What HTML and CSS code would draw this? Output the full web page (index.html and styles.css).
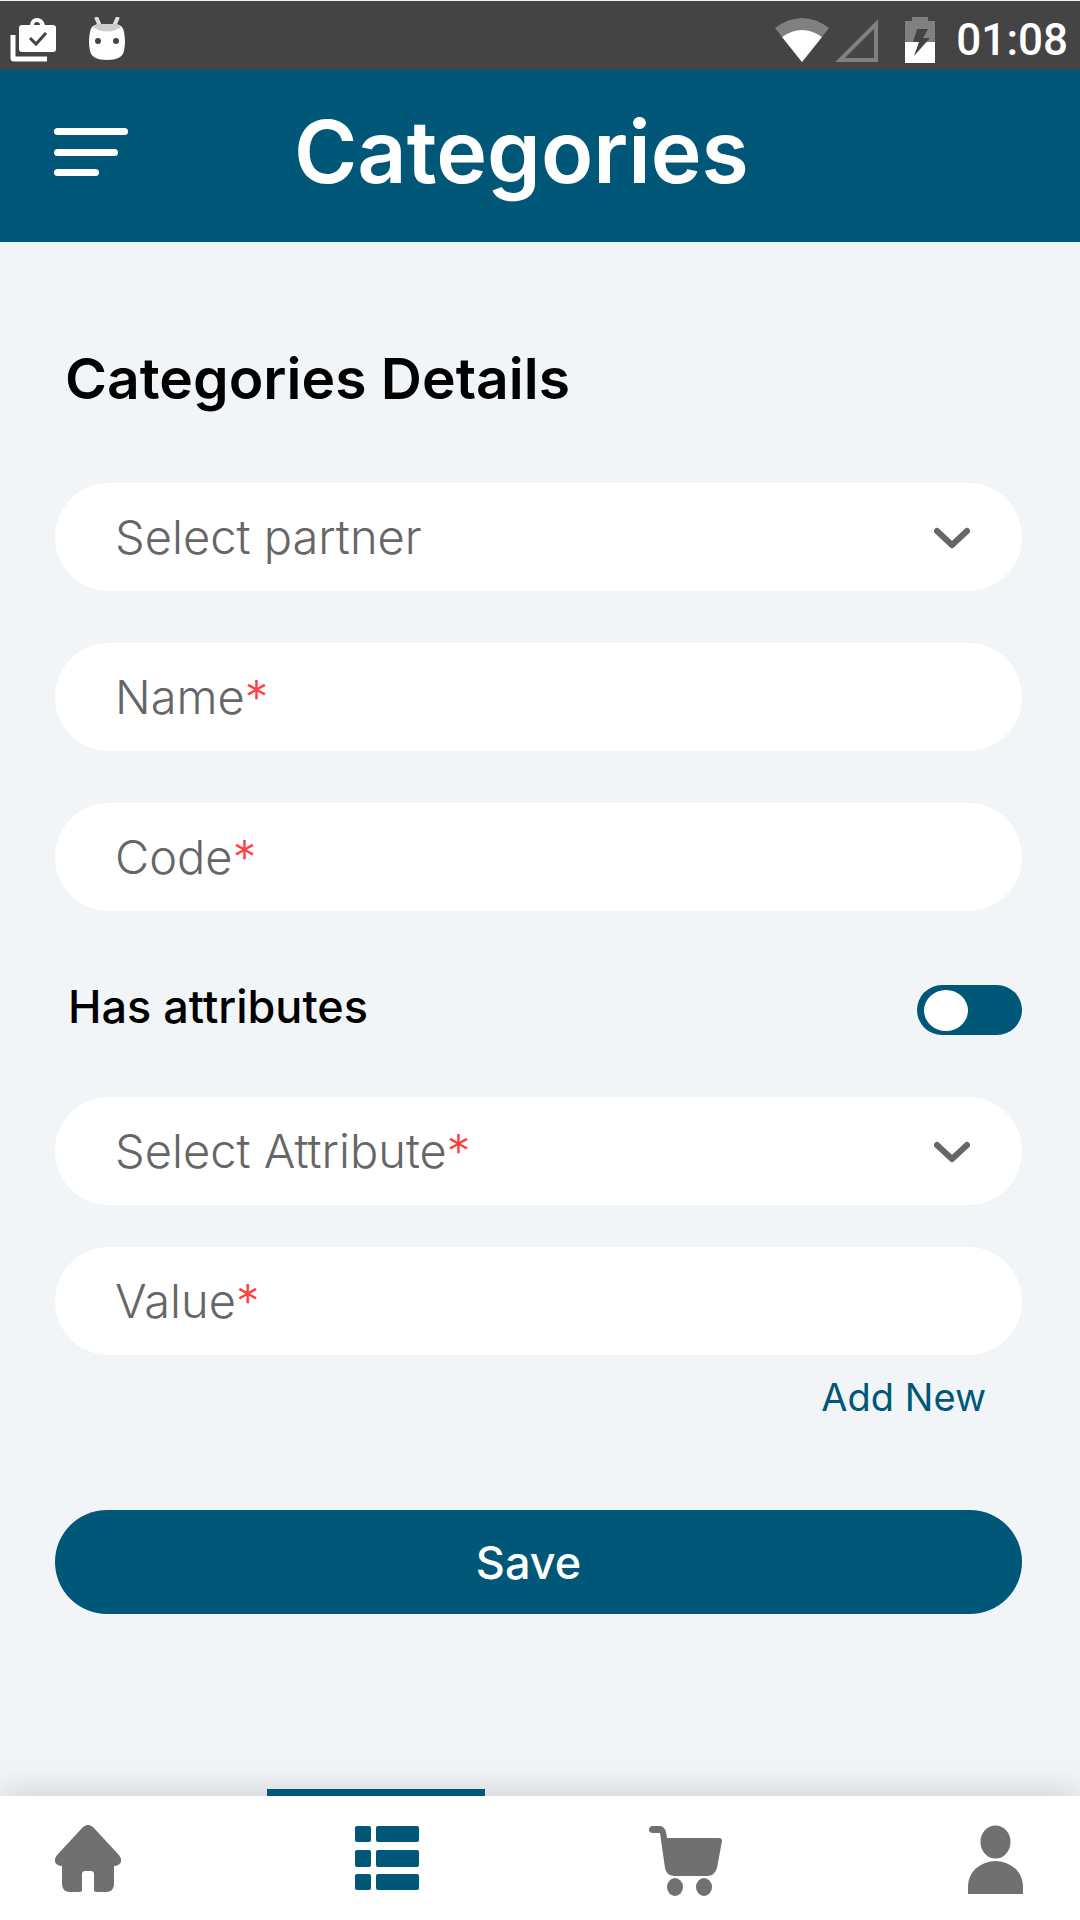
FILE: index.html
```html
<!DOCTYPE html>
<html lang="en">
<head>
  <meta charset="utf-8">
  <meta name="viewport" content="width=device-width, initial-scale=1">
  <title>Categories</title>
  <link rel="stylesheet" href="styles.css">
</head>
<body>
  <div class="status-bar">
    <svg class="status-icon" width="48" height="46" viewBox="0 0 48 46" aria-hidden="true">
      <path fill="none" stroke="#fff" stroke-width="5" stroke-linejoin="round" d="M3 18v23q0 1 1 1h33"/>
      <path fill="#fff" fill-rule="evenodd" d="M12 8h8q1-7 7-7t8 7h8q3 0 3 3v21q0 3-3 3H12q-3 0-3-3V11q0-3 3-3zM24 8h6q0-3-3-3t-3 3z"/>
      <path fill="none" stroke="#444" stroke-width="3" d="M20 21l6 6 10-11"/>
    </svg>
    <svg class="status-icon status-icon--droid" width="38" height="46" viewBox="0 0 38 46" aria-hidden="true">
      <path stroke="#ddd" stroke-width="4" d="M8 0l4 9M30 0l-4 9"/>
      <path fill="#fff" d="M10 7h18q7 1 8 8 2 10 0 19-2 9-17 9T2 34q-2-9 0-19 1-7 8-8z"/>
      <path fill="#ccc" d="M10 7h18q4 1 5 5-3-2-5 1-9 3-18 0-2-3-5-1 1-4 5-5z"/>
      <circle cx="10" cy="24" r="3" fill="#444"/><circle cx="28" cy="24" r="3" fill="#444"/>
    </svg>
    <svg class="status-icon status-icon--wifi" width="54" height="46" viewBox="0 0 54 46" aria-hidden="true">
      <path fill="#808080" d="M0 11Q27-9 54 11L27 45z"/>
      <path fill="#fff" d="M7 20q20-14 40 0L27 45z"/>
    </svg>
    <svg class="status-icon" width="46" height="46" viewBox="0 0 46 46" aria-hidden="true">
      <path fill="none" stroke="#808080" stroke-width="4" d="M6 43L42 7v36z"/>
    </svg>
    <svg class="status-icon status-icon--battery" width="32" height="46" viewBox="0 0 32 46" aria-hidden="true">
      <path fill="#808080" d="M8 0h16v4h7v21H1V4h7z"/>
      <path fill="#fff" d="M1 25h30v21H1z"/>
      <path fill="#444" d="M13 12h11l-5 9h7L10 39l5-14H9z"/>
    </svg>
    <time class="status-time">01:08</time>
  </div>

  <header class="app-header">
    <button class="menu-button" type="button" aria-label="Open menu">
      <svg width="74" height="48" viewBox="0 0 74 48" aria-hidden="true">
        <rect width="74" height="7" rx="3.5"/><rect y="21" width="64" height="7" rx="3.5"/><rect y="41" width="45" height="7" rx="3.5"/>
      </svg>
    </button>
    <h1 class="app-title">Categories</h1>
  </header>

  <main class="content">
    <h2 class="section-title">Categories Details</h2>
    <form class="form">
      <div class="fields">
        <div class="field">
          <select class="field-control" id="partner"><option value=""></option></select>
          <label class="field-label" for="partner">Select partner</label>
          <svg class="chevron" width="36" height="26" viewBox="0 0 36 26" aria-hidden="true"><path d="M3 7l15 14L33 7"/></svg>
        </div>
        <div class="field">
          <input class="field-control" id="name" type="text" placeholder=" " required>
          <label class="field-label" for="name">Name<span class="required">*</span></label>
        </div>
        <div class="field">
          <input class="field-control" id="code" type="text" placeholder=" " required>
          <label class="field-label" for="code">Code<span class="required">*</span></label>
        </div>
      </div>

      <div class="toggle-row">
        <label class="toggle-label" for="has-attributes">Has attributes</label>
        <input class="toggle" id="has-attributes" type="checkbox" role="switch">
      </div>

      <div class="fields fields--attributes">
        <div class="field">
          <select class="field-control" id="attribute" required><option value=""></option></select>
          <label class="field-label" for="attribute">Select Attribute<span class="required">*</span></label>
          <svg class="chevron" width="36" height="26" viewBox="0 0 36 26" aria-hidden="true"><path d="M3 7l15 14L33 7"/></svg>
        </div>
        <div class="field">
          <input class="field-control" id="value" type="text" placeholder=" " required>
          <label class="field-label" for="value">Value<span class="required">*</span></label>
        </div>
      </div>

      <a class="add-link" href="#">Add New</a>
      <button class="save-button" type="submit">Save</button>
    </form>
  </main>

  <nav class="tab-bar" aria-label="Main">
    <a class="tab" href="#" aria-label="Home">
      <svg width="66" height="68" viewBox="0 0 66 68" aria-hidden="true">
        <path d="M28 2q5-4 10 0l25 27q4 4 3 8-2 4-7 4v18q0 7-7 8H41q-2 0-2-2V49q0-3-3-3h-6q-3 0-3 3v16q0 2-2 2H14q-7-1-7-8V41q-5 0-7-4-1-4 3-8z"/>
      </svg>
    </a>
    <a class="tab tab--active" href="#" aria-label="Categories" aria-current="page">
      <svg width="64" height="66" viewBox="0 0 64 66" aria-hidden="true">
        <rect y="1" width="16" height="16" rx="2"/><rect x="21" y="1" width="43" height="16" rx="2"/>
        <rect y="25" width="16" height="17" rx="2"/><rect x="21" y="25" width="43" height="17" rx="2"/>
        <rect y="49" width="16" height="16" rx="2"/><rect x="21" y="49" width="43" height="16" rx="2"/>
      </svg>
    </a>
    <a class="tab" href="#" aria-label="Cart">
      <svg width="73" height="71" viewBox="0 0 73 71" aria-hidden="true">
        <path d="M4 1h8q5 1 6 12h52q3 0 3 3l-5 27q-2 7-9 8H25q-8-1-9-8L11 8H4q-4 0-4-3.500T4 1z"/>
        <ellipse cx="26" cy="62" rx="8" ry="9"/><ellipse cx="55" cy="62" rx="8" ry="9"/>
      </svg>
    </a>
    <a class="tab" href="#" aria-label="Profile">
      <svg width="55" height="69" viewBox="0 0 55 69" aria-hidden="true">
        <ellipse cx="27.500" cy="17" rx="15" ry="16.500"/>
        <path d="M0 69v-8a27.500 25 0 0 1 55 0v8z"/>
      </svg>
    </a>
  </nav>
</body>
</html>
```
FILE: styles.css
```css
:root {
  --brand: #005778;
  --page: #f1f5f8;
  --muted: #666;
  --icon: #707070;
  --danger: #ff4040;
}

* { box-sizing: border-box; }

body {
  margin: 0;
  min-height: 100vh;
  display: flex;
  flex-direction: column;
  background: var(--page);
  font-family: Inter, "Open Sans", sans-serif;
  color: #000;
}

button, input, select { font: inherit; }

.status-bar {
  display: flex;
  align-items: center;
  height: 70px;
  padding: 8px 12px 0 10px;
  border-top: 1px solid #f1f1f1;
  background: #444;
  color: #fff;
}

.status-icon { flex: none; }
.status-icon--droid { margin-left: 30px; }
.status-icon--wifi { margin-left: auto; }
.status-icon--battery { margin-left: 24px; }

.status-icon--wifi + .status-icon { margin-left: 5px; }

.status-time {
  margin-left: 20px;
  font: 500 44px/48px Roboto, sans-serif;
}

.app-header {
  display: flex;
  align-items: center;
  height: 172px;
  padding: 0 54px 8px;
  background: var(--brand);
  color: #fff;
}

.menu-button {
  display: flex;
  padding: 0;
  border: 0;
  background: none;
  fill: #fff;
}

.app-title {
  margin: 0 0 0 166px;
  font-size: 86px;
  font-weight: 600;
  line-height: 104px;
}

.content {
  flex: 1;
  padding: 103px 58px 0 55px;
}

.section-title {
  margin: 0 0 70px 10px;
  font-size: 57px;
  font-weight: 600;
  line-height: 68px;
}

.form {
  display: flex;
  flex-direction: column;
}

.fields {
  display: flex;
  flex-direction: column;
  gap: 52px;
}

.fields--attributes { gap: 42px; }

.field {
  display: grid;
  align-items: center;
}

.field > * { grid-area: 1 / 1; }

.field-control {
  width: 100%;
  height: 108px;
  padding: 0 64px;
  border: 0;
  border-radius: 54px;
  background: #fff;
  color: var(--muted);
  font-size: 47px;
  appearance: none;
}

.field-label {
  justify-self: start;
  padding-left: 60px;
  color: var(--muted);
  font-size: 47px;
  font-weight: 300;
  line-height: 56px;
  pointer-events: none;
}

.field-control:not(select, :placeholder-shown) + .field-label { visibility: hidden; }

.required { color: var(--danger); }

.chevron {
  justify-self: end;
  margin-right: 52px;
  fill: none;
  stroke: var(--muted);
  stroke-width: 6;
  stroke-linecap: round;
  stroke-linejoin: round;
  pointer-events: none;
}

.toggle-row {
  display: flex;
  align-items: flex-start;
  justify-content: space-between;
  margin: 74px 0 62px;
  padding-left: 13px;
}

.toggle-label {
  font-size: 45px;
  font-weight: 500;
  line-height: 44px;
}

.toggle {
  display: flex;
  align-items: center;
  width: 105px;
  height: 50px;
  margin: 0;
  padding: 0 7px;
  border-radius: 25px;
  background: var(--brand);
  appearance: none;
}

.toggle::before {
  content: "";
  width: 44px;
  height: 41px;
  border-radius: 50%;
  background: #fff;
}

.toggle:checked { justify-content: flex-end; }

.add-link {
  align-self: flex-end;
  margin: 20px 36px 0 0;
  color: var(--brand);
  font-size: 38px;
  line-height: 44px;
  text-decoration: none;
}

.save-button {
  height: 104px;
  margin: 91px 0 40px;
  padding: 0 20px 0 0;
  border: 0;
  border-radius: 52px;
  background: var(--brand);
  color: #fff;
  font-size: 45px;
  font-weight: 500;
}

.tab-bar {
  display: grid;
  grid-template-columns: 300fr 294fr 319fr 55px;
  height: 124px;
  padding: 29px 57px 0 55px;
  background: #fff;
  box-shadow: 0 0 36px rgba(0, 0, 0, 0.18);
}

.tab {
  position: relative;
  justify-self: start;
  fill: var(--icon);
}

.tab svg { display: block; }

.tab--active { fill: var(--brand); }

/* Marker that rests on the top edge of the bar above the current tab */
.tab--active::before {
  content: "";
  position: absolute;
  top: -36px;
  left: -88px;
  width: 218px;
  height: 7px;
  background: var(--brand);
}
```
